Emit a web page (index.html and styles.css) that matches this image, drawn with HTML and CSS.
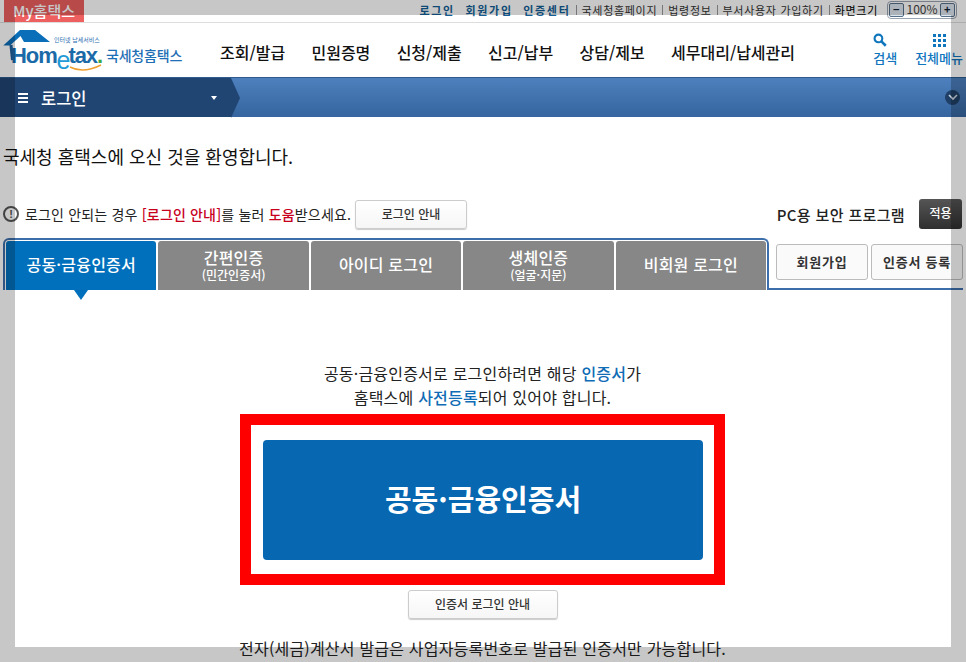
FILE: index.html
```html
<!DOCTYPE html>
<html lang="ko">
<head>
  <meta charset="UTF-8" />
  <title>국세청 홈택스</title>
  <link rel="stylesheet" href="styles.css">
</head>
<body>
  <div class="util-bar">
    <a class="my-tab">My홈택스</a>
    <div class="util-links">
      <a class="util-strong">로그인</a>
      <a class="util-strong">회원가입</a>
      <a class="util-strong">인증센터</a>
      <span class="util-sep"></span>
      <a>국세청홈페이지</a>
      <span class="util-sep"></span>
      <a>법령정보</a>
      <span class="util-sep"></span>
      <a>부서사용자 가입하기</a>
      <span class="util-sep"></span>
      <a class="util-dark">화면크기</a>
      <div class="zoom-box">
        <span class="zoom-btn">−</span>
        <span class="zoom-val">100%</span>
        <span class="zoom-btn">+</span>
      </div>
    </div>
  </div>

  <header class="nav-row">
    <div class="logo">
      <svg class="logo-house" width="56" height="40" viewBox="0 0 56 40">
        <path d="M3.3 19.5 L20 4 L35 4 L50 16 L24 16 L20.5 10 L10 19.5 Z" fill="#0b6eb8"/>
        <path d="M11 19 L12.5 34" stroke="#1b5f9e" stroke-width="3" fill="none"/>
      </svg>
      <span class="logo-sub">인터넷 납세서비스</span>
      <span class="logo-word">Hom<i>e</i>tax<b>.</b></span>
      <svg class="logo-arc" width="34" height="10" viewBox="0 0 34 10">
        <path d="M1 3 Q14 10 32 1" stroke="#f0a030" stroke-width="1.5" fill="none"/>
      </svg>
      <span class="logo-kr">국세청홈택스</span>
    </div>
    <nav class="main-nav">
      <a>조회/발급</a>
      <a>민원증명</a>
      <a>신청/제출</a>
      <a>신고/납부</a>
      <a>상담/제보</a>
      <a>세무대리/납세관리</a>
    </nav>
    <div class="nav-tools">
      <a class="tool tool-search">
        <svg width="14" height="14" viewBox="0 0 16 16">
          <circle cx="6.2" cy="6.2" r="4.4" fill="none" stroke="#0f75bd" stroke-width="2.4"/>
          <path d="M9.6 9.6 L14.6 14.6" stroke="#0f75bd" stroke-width="3"/>
        </svg>
        <span>검색</span>
      </a>
      <a class="tool tool-all">
        <span class="dots"><i></i><i></i><i></i><i></i><i></i><i></i><i></i><i></i><i></i></span>
        <span>전체메뉴</span>
      </a>
    </div>
  </header>

  <div class="crumb-bar">
    <div class="crumb">
      <span class="burger"><i></i><i></i><i></i></span>
      <span class="crumb-label">로그인</span>
      <span class="crumb-caret"></span>
    </div>
    <span class="crumb-more">
      <svg width="10" height="7" viewBox="0 0 10 7"><path d="M1 1 L5 5 L9 1" stroke="#c9d3e0" stroke-width="1.6" fill="none"/></svg>
    </span>
  </div>

  <main class="content">
    <h1 class="welcome">국세청 홈택스에 오신 것을 환영합니다.</h1>

    <div class="help-row">
      <div class="help-left">
        <span class="help-icon">!</span>
        <span class="help-text">로그인 안되는 경우 <em>[로그인 안내]</em>를 눌러 <em>도움</em>받으세요.</span>
        <a class="btn btn-help">로그인 안내</a>
      </div>
      <div class="help-right">
        <span class="pc-label">PC용 보안 프로그램</span>
        <a class="btn-dark">적용</a>
      </div>
    </div>

    <div class="tab-row">
      <div class="tabs">
        <a class="tab tab-on">공동·금융인증서</a>
        <a class="tab tab-two">간편인증<small>(민간인증서)</small></a>
        <a class="tab">아이디 로그인</a>
        <a class="tab tab-two">생체인증<small>(얼굴·지문)</small></a>
        <a class="tab">비회원 로그인</a>
      </div>
      <div class="tab-side">
        <a class="btn btn-side">회원가입</a>
        <a class="btn btn-side">인증서 등록</a>
      </div>
    </div>

    <section class="login-pane">
      <p class="notice">공동·금융인증서로 로그인하려면 해당 <strong>인증서</strong>가<br>홈택스에 <strong>사전등록</strong>되어 있어야 합니다.</p>
      <div class="cert-frame">
        <a class="cert-btn">공동·금융인증서</a>
      </div>
      <a class="btn btn-guide">인증서 로그인 안내</a>
      <p class="invoice-note">전자(세금)계산서 발급은 사업자등록번호로 발급된 인증서만 가능합니다.</p>
    </section>
  </main>

  <div class="dim-frame"></div>
</body>
</html>
```

FILE: styles.css
```css
* {
  margin: 0;
  padding: 0;
  box-sizing: border-box;
}

html, body {
  height: 662px;
  overflow: hidden;
}

body {
  position: relative;
  font-family: "Noto Sans CJK KR", "Noto Sans", sans-serif;
  background: #fff;
  color: #222;
}

a {
  color: inherit;
  text-decoration: none;
}

/* top utility bar */
.util-bar {
  display: flex;
  justify-content: space-between;
  height: 23px;
  padding: 0 5px 0 4px;
  background: #fff;
  border-bottom: 1px solid #ddd;
}

.my-tab {
  width: 80px;
  height: 22px;
  background: #ee5f5f;
  color: #fff;
  font-size: 15px;
  font-weight: 500;
  line-height: 21px;
  text-align: center;
}

.util-links {
  display: flex;
  align-items: center;
  height: 20px;
  font-size: 11px;
  letter-spacing: 0.7px;
  color: #333;
}

.util-links a {
  margin: 0 5px 0 5px;
}

.util-links .util-strong {
  margin: 0 5px 0 5.5px;
  color: #135e96;
  font-weight: 700;
  letter-spacing: 1.7px;
}

.util-links .util-dark {
  color: #000;
  margin-right: 9px;
}

.util-sep {
  width: 1px;
  height: 10px;
  background: #999;
}

.zoom-box {
  display: flex;
  align-items: center;
  justify-content: space-between;
  width: 70px;
  height: 18px;
  padding: 0 1px;
  margin-right: 4px;
  border: 1px solid #9aa3b0;
  border-radius: 4px;
}

.zoom-val {
  margin-top: -2px;
  font-size: 12px;
  letter-spacing: 0;
  line-height: 14px;
  color: #444;
}

.zoom-btn {
  width: 15px;
  height: 14px;
  border: 1px solid #56708c;
  border-radius: 2px;
  background: #dbe5ee;
  color: #123;
  font-size: 11px;
  font-weight: 700;
  line-height: 11px;
  text-align: center;
}

/* logo + main menu */
.nav-row {
  display: flex;
  align-items: center;
  height: 54px;
  background: #fff;
}

.logo {
  position: relative;
  width: 220px;
  height: 54px;
  flex-shrink: 0;
}

.logo-house {
  position: absolute;
  left: 0;
  top: 3px;
}

.logo-sub {
  position: absolute;
  left: 54px;
  top: 13px;
  font-size: 6px;
  line-height: 8px;
  color: #2a70b0;
  white-space: nowrap;
}

.logo-word {
  position: absolute;
  left: 11px;
  top: 17px;
  font-family: "Liberation Sans", sans-serif;
  font-size: 22px;
  font-weight: 700;
  letter-spacing: -1.1px;
  line-height: 28px;
  color: #1b6aa8;
  white-space: nowrap;
}

.logo-word i {
  position: relative;
  top: 6px;
  font-size: 25px;
  font-weight: 400;
  font-style: normal;
  letter-spacing: -2px;
  color: #1f9ad6;
}

.logo-word b {
  color: #3aa648;
}

.logo-arc {
  position: absolute;
  left: 69px;
  top: 41px;
}

.logo-kr {
  position: absolute;
  left: 106px;
  top: 22px;
  font-size: 14px;
  font-weight: 500;
  letter-spacing: -0.2px;
  line-height: 20px;
  color: #1e6fb5;
  white-space: nowrap;
}

.main-nav {
  display: flex;
  gap: 26.3px;
  flex: 1;
  padding-top: 3px;
  font-size: 16px;
  font-weight: 500;
  color: #111;
  white-space: nowrap;
}

.nav-tools {
  display: flex;
  gap: 18px;
  padding-right: 3px;
  margin-top: -1px;
  color: #0f75bd;
}

.tool {
  display: flex;
  flex-direction: column;
  align-items: center;
  gap: 3px;
  font-size: 13px;
  font-weight: 500;
  line-height: 16px;
  white-space: nowrap;
}

.tool-search {
  align-items: flex-start;
  padding-left: 1px;
}

.dots {
  display: grid;
  grid-template-columns: repeat(3, 3px);
  gap: 2px;
  width: 13px;
  height: 13px;
  margin: 1px 0 0;
}

.dots i {
  background: #0f75bd;
}

/* blue title bar */
.crumb-bar {
  display: flex;
  align-items: center;
  justify-content: space-between;
  height: 40px;
  padding-right: 6px;
  background: linear-gradient(#4d80bd, #36659f);
  border-top: 1px solid #2e5a8e;
}

.crumb {
  position: relative;
  display: flex;
  align-items: center;
  width: 231px;
  height: 39px;
  padding-left: 18px;
  background: #204573;
  color: #fff;
}

.crumb::after {
  content: "";
  position: absolute;
  left: 100%;
  top: 0;
  border-style: solid;
  border-width: 20px 0 20px 9px;
  border-color: transparent transparent transparent #204573;
}

.burger {
  display: flex;
  flex-direction: column;
  gap: 2px;
  width: 10px;
}

.burger i {
  height: 2px;
  background: #fff;
}

.crumb-label {
  margin-left: 13px;
  font-size: 16.5px;
  font-weight: 500;
}

.crumb-caret {
  position: absolute;
  left: 211px;
  top: 18px;
  border-style: solid;
  border-width: 4px 3.5px 0;
  border-color: #fff transparent transparent;
}

.crumb-more {
  display: flex;
  align-items: center;
  justify-content: center;
  width: 15px;
  height: 15px;
  border-radius: 50%;
  background: #1f3f66;
}

/* page body */
.content {
  padding: 0 4px 0 3px;
}

.welcome {
  margin-top: 26px;
  font-size: 18px;
  font-weight: 400;
  line-height: 26px;
  color: #111;
}

.help-row {
  display: flex;
  justify-content: space-between;
  margin-top: 30px;
  height: 30px;
}

.help-left,
.help-right {
  display: flex;
  align-items: center;
}

.help-icon {
  width: 16px;
  height: 16px;
  border: 2px solid #555;
  border-radius: 50%;
  color: #555;
  font-family: "Liberation Sans", sans-serif;
  font-size: 11px;
  font-weight: 700;
  line-height: 12px;
  text-align: center;
}

.help-text {
  margin-left: 6px;
  font-size: 14px;
  letter-spacing: 0.17px;
  white-space: nowrap;
}

.help-text em {
  font-style: normal;
  font-weight: 500;
  color: #c8001e;
}

.btn {
  display: block;
  background: linear-gradient(#fff, #f6f6f6);
  border: 1px solid #ccc;
  border-radius: 3px;
  box-shadow: 0 1px 1px #ccc;
  color: #333;
  font-size: 12px;
  font-weight: 500;
  text-align: center;
  white-space: nowrap;
}

.btn-help {
  width: 112px;
  height: 29px;
  margin-left: 4px;
  line-height: 26px;
}

.pc-label {
  font-size: 15px;
  font-weight: 500;
  letter-spacing: 0.35px;
  white-space: nowrap;
}

.btn-dark {
  width: 43px;
  height: 30px;
  margin-left: 14px;
  background: linear-gradient(#555, #2f2f2f);
  border-radius: 3px;
  color: #fff;
  font-size: 12px;
  font-weight: 500;
  line-height: 27px;
  text-align: center;
}

/* tabs */
.tab-row {
  display: flex;
  justify-content: space-between;
  margin-top: 9px;
  margin-right: -1px;
  height: 52px;
  border-bottom: 2px solid #3b6eaa;
}

.tabs {
  display: flex;
  gap: 2px;
  width: 766px;
  height: 52px;
  padding: 1px 1px 0;
  border: 2px solid #3b6eaa;
  border-bottom: none;
  border-radius: 6px 6px 0 0;
  background: #fff;
}

.tab {
  position: relative;
  display: flex;
  flex: 1;
  flex-direction: column;
  align-items: center;
  justify-content: center;
  padding-bottom: 4px;
  background: #878787;
  border-radius: 3px 3px 0 0;
  color: #fff;
  font-size: 16px;
  font-weight: 500;
  letter-spacing: 0.2px;
  line-height: 20px;
  white-space: nowrap;
}

.tab small {
  font-size: 12px;
  letter-spacing: 0;
  line-height: 15px;
}

.tab-two {
  padding-bottom: 3px;
}

.tab-on {
  background: #0070bc;
}

.tab-on::after {
  content: "";
  position: absolute;
  left: 68px;
  top: 100%;
  border-style: solid;
  border-width: 10px 7px 0;
  border-color: #0070bc transparent transparent;
}

.tab-side {
  display: flex;
  gap: 3px;
  padding-top: 6px;
}

.btn-side {
  width: 92px;
  height: 36px;
  background: #fafafa;
  box-shadow: none;
  border-color: #bbb;
  font-size: 13px;
  font-weight: 700;
  letter-spacing: 0.8px;
  line-height: 33px;
}

/* login pane */
.login-pane {
  display: flex;
  flex-direction: column;
  align-items: center;
  padding-top: 71px;
}

.notice {
  font-size: 16px;
  letter-spacing: 0.2px;
  line-height: 24px;
  text-align: center;
  color: #222;
}

.notice strong {
  font-weight: 500;
  color: #0f6cb5;
}

.cert-frame {
  width: 485px;
  height: 171px;
  margin-top: 5px;
  padding: 15px 11px 14px 12px;
  border: 11px solid #f00;
  background: #fff;
}

.cert-btn {
  display: block;
  height: 120px;
  background: #0767b1;
  border-radius: 4px;
  color: #fff;
  font-size: 29px;
  font-weight: 700;
  line-height: 116px;
  text-align: center;
}

.btn-guide {
  width: 150px;
  height: 29px;
  margin-top: 5px;
  line-height: 26px;
}

.invoice-note {
  margin-top: 16px;
  font-size: 16px;
  letter-spacing: 0.2px;
  line-height: 26px;
  white-space: nowrap;
}

/* grey frame lying over the whole shot */
.dim-frame {
  position: absolute;
  inset: 0;
  border: 15px solid rgba(0, 0, 0, 0.22);
  pointer-events: none;
}
```
